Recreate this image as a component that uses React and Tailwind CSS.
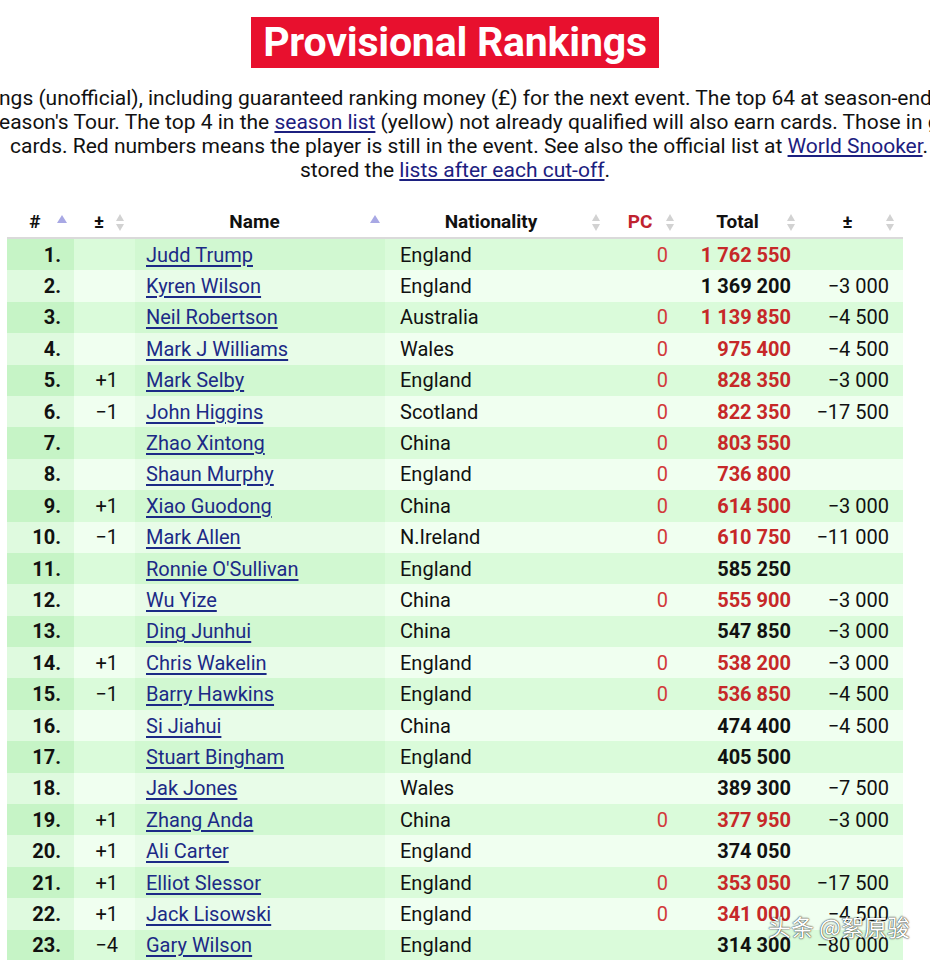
import React from "react";

const rows = [
  [1, "", "Judd Trump", "England", "0", "1 762 550", true, ""],
  [2, "", "Kyren Wilson", "England", "", "1 369 200", false, "−3 000"],
  [3, "", "Neil Robertson", "Australia", "0", "1 139 850", true, "−4 500"],
  [4, "", "Mark J Williams", "Wales", "0", "975 400", true, "−4 500"],
  [5, "+1", "Mark Selby", "England", "0", "828 350", true, "−3 000"],
  [6, "−1", "John Higgins", "Scotland", "0", "822 350", true, "−17 500"],
  [7, "", "Zhao Xintong", "China", "0", "803 550", true, ""],
  [8, "", "Shaun Murphy", "England", "0", "736 800", true, ""],
  [9, "+1", "Xiao Guodong", "China", "0", "614 500", true, "−3 000"],
  [10, "−1", "Mark Allen", "N.Ireland", "0", "610 750", true, "−11 000"],
  [11, "", "Ronnie O'Sullivan", "England", "", "585 250", false, ""],
  [12, "", "Wu Yize", "China", "0", "555 900", true, "−3 000"],
  [13, "", "Ding Junhui", "China", "", "547 850", false, "−3 000"],
  [14, "+1", "Chris Wakelin", "England", "0", "538 200", true, "−3 000"],
  [15, "−1", "Barry Hawkins", "England", "0", "536 850", true, "−4 500"],
  [16, "", "Si Jiahui", "China", "", "474 400", false, "−4 500"],
  [17, "", "Stuart Bingham", "England", "", "405 500", false, ""],
  [18, "", "Jak Jones", "Wales", "", "389 300", false, "−7 500"],
  [19, "+1", "Zhang Anda", "China", "0", "377 950", true, "−3 000"],
  [20, "+1", "Ali Carter", "England", "", "374 050", false, ""],
  [21, "+1", "Elliot Slessor", "England", "0", "353 050", true, "−17 500"],
  [22, "+1", "Jack Lisowski", "England", "0", "341 000", true, "−4 500"],
  [23, "−4", "Gary Wilson", "England", "", "314 300", false, "−80 000"],
];

const GRID = "grid grid-cols-[67px_61px_250px_223px_75px_120px_100px]";

function SortedArrow() {
  return (
    <svg width="10" height="8" viewBox="0 0 10 8" className="mb-[7px]">
      <path d="M5 0 L10 8 L0 8 Z" fill="#a8a8e4" />
    </svg>
  );
}

function BothArrows() {
  return (
    <svg width="8" height="17" viewBox="0 0 8 17">
      <path d="M4 0 L8 7 L0 7 Z" fill="#d2d2d2" />
      <path d="M4 17 L8 10 L0 10 Z" fill="#d2d2d2" />
    </svg>
  );
}

function Head({ children, sorted, right, red }) {
  return (
    <div className="relative flex items-center justify-center pr-[11px] pt-[3px]">
      <span className={red ? "text-[#c0222f]" : "text-[#111]"}>{children}</span>
      <span className={"absolute top-[3px] bottom-0 flex items-center " + right}>
        {sorted ? <SortedArrow /> : <BothArrows />}
      </span>
    </div>
  );
}

export default function App() {
  return (
    <div className="relative w-[930px] h-[960px] overflow-hidden bg-white font-['Roboto',sans-serif] text-[#111]">
      <div className="w-[910px]">
        <div className="flex justify-center pt-[17px]">
          <h1 className="bg-[#e8102e] text-white font-bold text-[41px] leading-[51px] px-[12px] tracking-[-0.2px]">
            Provisional Rankings
          </h1>
        </div>

        <div className="mt-[18px] text-[21px] leading-[24px] whitespace-nowrap">
          <div className="-ml-[1px]">
            ngs (unofficial), including guaranteed ranking money (£) for the next event. The top 64 at season-end will get a tour card
          </div>
          <div className="-ml-[1px]">
            eason's Tour. The top 4 in the{" "}
            <span className="text-[#1c2080] underline">season list</span> (yellow) not already qualified will also earn cards. Those in green
          </div>
          <div className="ml-[10px]">
            cards. Red numbers means the player is still in the event. See also the official list at{" "}
            <span className="text-[#1c2080] underline">World Snooker</span>. We have
          </div>
          <div className="text-center">
            stored the <span className="text-[#1c2080] underline">lists after each cut-off</span>.
          </div>
        </div>

        <div className="ml-[7px] mt-[23px] w-[896px]">
          <div className={GRID + " h-[34px] border-b-2 border-[#dadada] font-bold text-[19px]"}>
            <Head sorted right="right-[7px]">#</Head>
            <Head right="right-[11px]">±</Head>
            <Head sorted right="right-[5px]">Name</Head>
            <Head right="right-[8px]">Nationality</Head>
            <Head red right="right-[9px]">PC</Head>
            <Head right="right-[8px]">Total</Head>
            <Head right="right-[9px]">±</Head>
          </div>

          {rows.map(([n, mv, name, nat, pc, total, red, diff]) => {
            const odd = n % 2 === 1;
            const base = odd ? "bg-[#dafbda]" : "bg-[#f0fff0]";
            const prim = odd ? "bg-[#c6f4c6]" : "bg-[#dffadf]";
            const sec = odd ? "bg-[#d1f8d1]" : "bg-[#e8fce8]";
            return (
              <div key={n} className={GRID + " h-[31.4px] text-[20px] items-stretch"}>
                <div className={prim + " flex items-center justify-end pr-[13px] font-bold"}>{n}.</div>
                <div className={base + " flex items-center justify-end pr-[17px]"}>{mv}</div>
                <div className={sec + " flex items-center pl-[11px]"}>
                  <span className="text-[#1c2a86] underline underline-offset-[3px]">{name}</span>
                </div>
                <div className={base + " flex items-center pl-[15px]"}>{nat}</div>
                <div className={base + " flex items-center justify-end pr-[15px] text-[#d23a3a]"}>{pc}</div>
                <div
                  className={
                    base +
                    " flex items-center justify-end pr-[12px] font-bold " +
                    (red ? "text-[#c62828]" : "text-[#111]")
                  }
                >
                  {total}
                </div>
                <div className={base + " flex items-center justify-end pr-[14px]"}>{diff}</div>
              </div>
            );
          })}
        </div>
      </div>

      <div className="absolute left-[768px] top-[909px] text-[23px] text-white font-['Noto_Sans_CJK_SC',sans-serif] [text-shadow:0_0_1px_rgba(0,0,0,0.9),0_0_2px_rgba(0,0,0,0.6)]">
        头条 @絮原骏
      </div>
    </div>
  );
}
